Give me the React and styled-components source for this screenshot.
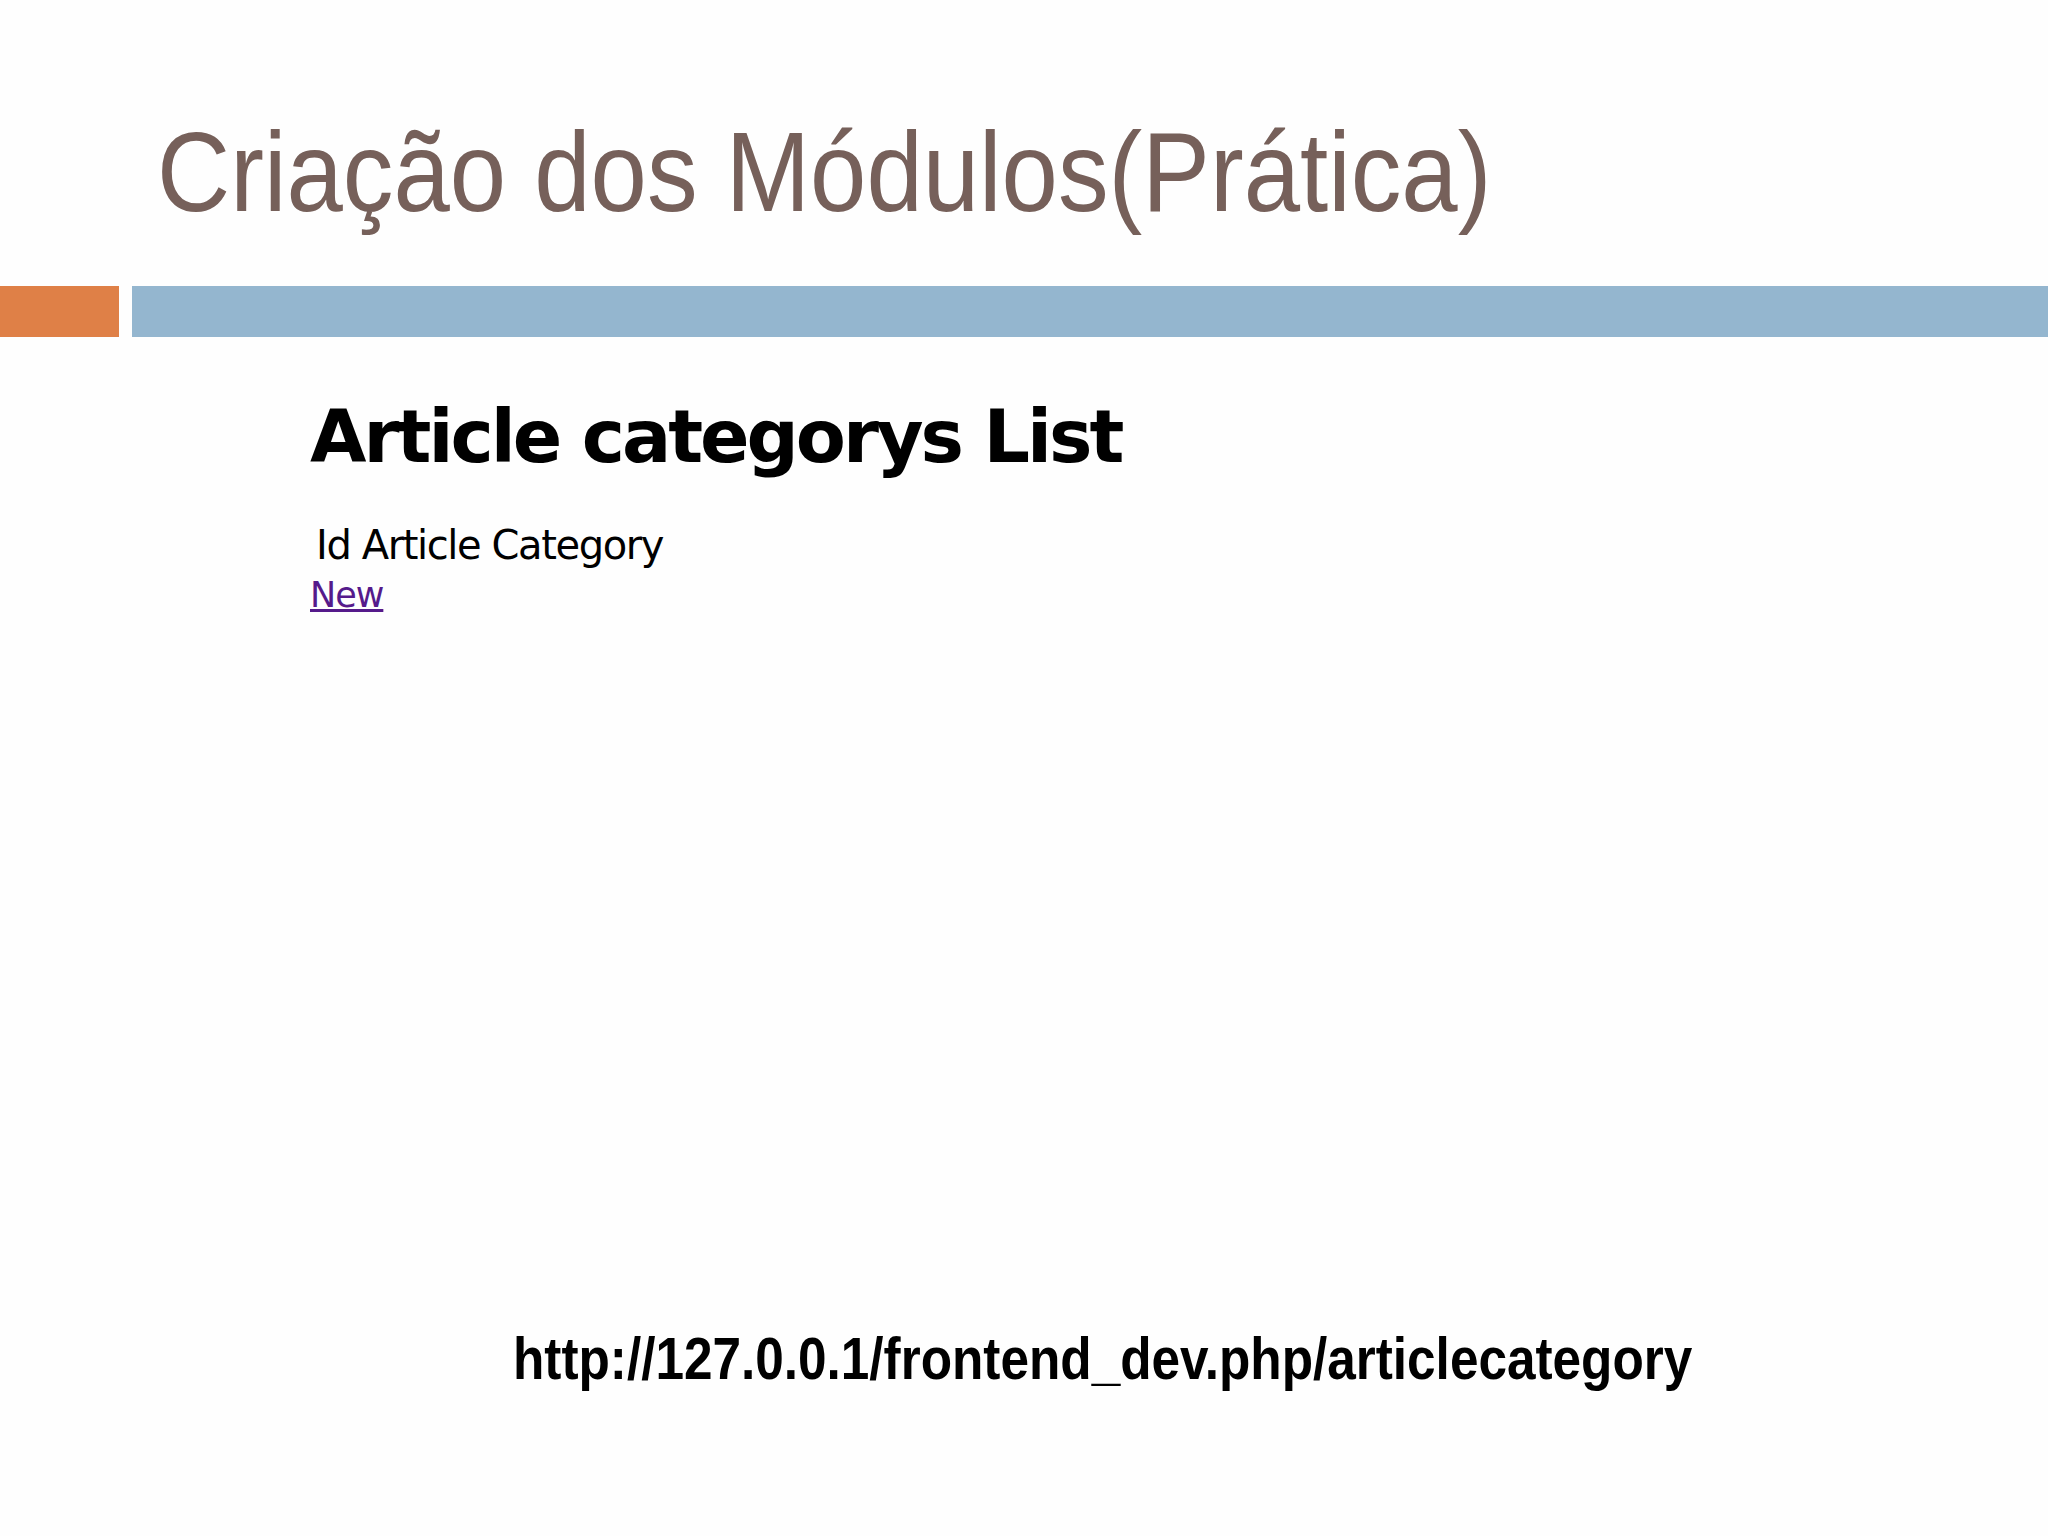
import * as React from "react"
import styled, { createGlobalStyle } from "styled-components"

const GlobalStyle = createGlobalStyle`
    html, body {
        margin: 0;
        padding: 0;
        background: #fefefe;
    }
`

const Slide = styled.div`
    width: 2048px;
    min-height: 1536px;
    background: #fefefe;
    display: flex;
    flex-direction: column;
    overflow: hidden;
`

const TitleArea = styled.header`
    padding: 116px 0 0 157px;
`

const Title = styled.h1`
    margin: 0;
    font-family: "Liberation Sans", Arial, sans-serif;
    font-weight: 400;
    font-size: 113px;
    line-height: 1;
    color: #76605a;
    white-space: nowrap;
    display: inline-block;
    transform: scaleX(0.8965);
    transform-origin: left center;
`

const Rule = styled.div`
    margin-top: 57px;
    height: 51px;
    display: flex;
    gap: 13px;
`

const Accent = styled.div`
    width: 119px;
    background: #df8047;
`

const Band = styled.div`
    flex: 1;
    background: #94b6cf;
`

const Content = styled.section`
    padding-left: 310px;
    margin-top: 63px;
    display: flex;
    flex-direction: column;
    align-items: flex-start;
`

const ListHeading = styled.h2`
    margin: 0;
    font-family: "DejaVu Sans", Verdana, sans-serif;
    font-weight: 700;
    font-size: 73px;
    line-height: 1;
    letter-spacing: -3px;
    color: #000;
    white-space: nowrap;
`

const HeaderCell = styled.div`
    margin-top: 52px;
    padding-left: 6px;
    font-family: "DejaVu Sans", Tahoma, sans-serif;
    font-size: 40px;
    line-height: 1;
    letter-spacing: -1.4px;
    color: #000;
    white-space: nowrap;
`

const NewLink = styled.a`
    margin-top: 13px;
    font-family: "DejaVu Sans", Tahoma, sans-serif;
    font-size: 35px;
    line-height: 1;
    letter-spacing: -1px;
    color: #551a8b;
    text-decoration: underline;
`

const Footer = styled.footer`
    margin-top: 716px;
    padding-left: 513px;
`

const Url = styled.span`
    display: inline-block;
    font-family: "Liberation Sans", Arial, sans-serif;
    font-weight: 700;
    font-size: 60px;
    line-height: 1;
    color: #000;
    white-space: nowrap;
    transform: scaleX(0.855);
    transform-origin: left center;
`

const App = () => {
    return (
        <>
            <GlobalStyle />
            <Slide>
                <TitleArea>
                    <Title>Criação dos Módulos(Prática)</Title>
                </TitleArea>
                <Rule>
                    <Accent />
                    <Band />
                </Rule>
                <Content>
                    <ListHeading>Article categorys List</ListHeading>
                    <HeaderCell>Id Article Category</HeaderCell>
                    <NewLink href="#">New</NewLink>
                </Content>
                <Footer>
                    <Url>http://127.0.0.1/frontend_dev.php/articlecategory</Url>
                </Footer>
            </Slide>
        </>
    )
}

export default App
